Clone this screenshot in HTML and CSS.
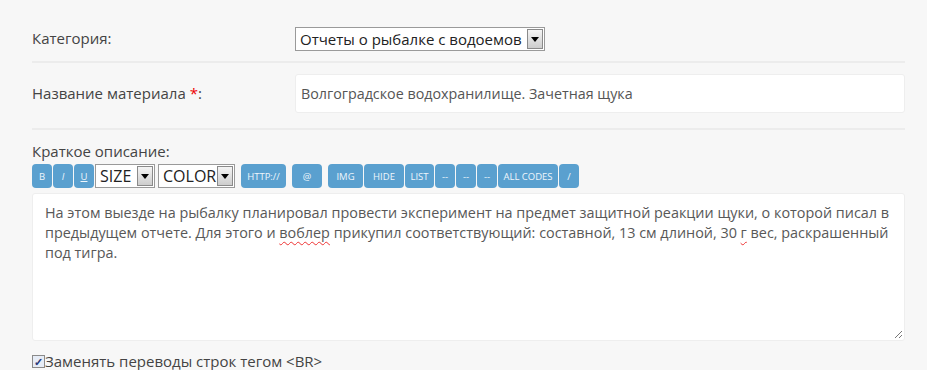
FILE: index.html
```html
<!DOCTYPE html>
<html lang="ru">
<head>
  <meta charset="UTF-8">
  <title>Добавить материал</title>
  <link rel="stylesheet" href="styles.css">
</head>
<body>
  <form class="edit-form">
    <div class="form-row">
      <label class="row-label">Категория:</label>
      <div class="row-field">
        <span class="old-select old-select-wide">
          <span class="old-select-text">Отчеты о рыбалке с водоемов</span>
          <span class="old-select-arrow"></span>
        </span>
      </div>
    </div>
    <div class="form-row form-row-input">
      <label class="row-label">Название материала <span class="req">*</span>:</label>
      <div class="row-field">
        <input type="text" class="text-input" value="Волгоградское водохранилище. Зачетная щука">
      </div>
    </div>
    <div class="desc-block">
      <label class="desc-label">Краткое описание:</label>
      <div class="bb-toolbar">
        <span class="bb-btn bb-sq">B</span>
        <span class="bb-btn bb-sq"><i>I</i></span>
        <span class="bb-btn bb-sq"><u>U</u></span>
        <span class="old-select old-select-size">
          <span class="old-select-text">SIZE</span>
          <span class="old-select-arrow"></span>
        </span>
        <span class="old-select old-select-color">
          <span class="old-select-text">COLOR</span>
          <span class="old-select-arrow"></span>
        </span>
        <span class="bb-btn bb-gap bb-http">HTTP://</span>
        <span class="bb-btn bb-gap bb-mail">@</span>
        <span class="bb-btn bb-gap bb-img">IMG</span>
        <span class="bb-btn bb-hide">HIDE</span>
        <span class="bb-btn bb-list">LIST</span>
        <span class="bb-btn bb-sq">--</span>
        <span class="bb-btn bb-sq">--</span>
        <span class="bb-btn bb-sq">--</span>
        <span class="bb-btn bb-all">ALL CODES</span>
        <span class="bb-btn bb-sq">/</span>
      </div>
      <div class="desc-area">
        <p>На этом выезде на рыбалку планировал провести эксперимент на предмет защитной реакции щуки, о которой писал в предыдущем отчете. Для этого и <span class="typo">воблер</span> прикупил соответствующий: составной, 13 см длиной, 30 <span class="typo">г</span> вес, раскрашенный под тигра.</p>
        <span class="resize-grip"></span>
      </div>
      <label class="br-check"><span class="check-box">&#10003;</span>Заменять переводы строк тегом &lt;BR&gt;</label>
    </div>
  </form>
</body>
</html>
```

FILE: styles.css
```css
/* General */
* {
  margin: 0;
  padding: 0;
  box-sizing: border-box;
}

body {
  background: #f7f7f7;
  font-family: 'Open Sans', sans-serif;
  color: #444;
  height: 370px;
  overflow: hidden;
}

.edit-form {
  width: 873px;
  margin-left: 32px;
  padding-top: 27px;
}

/* Rows */
.form-row {
  display: flex;
  align-items: center;
  border-bottom: 2px solid #ececec;
  padding-bottom: 10px;
}

.form-row-input {
  padding-top: 11px;
  padding-bottom: 15px;
}

.row-label {
  width: 263px;
  font-size: 15px;
  color: #444;
  margin-top: -2px;
}

.req {
  color: #e00;
}

.row-field {
  flex: 1;
}

.text-input {
  width: 100%;
  height: 39px;
  border: 1px solid #eee;
  border-radius: 3px;
  background: #fff;
  padding: 0 5px;
  font-family: 'Open Sans', sans-serif;
  font-size: 14.3px;
  color: #555;
  outline: none;
}

/* Old style select */
.old-select {
  display: inline-flex;
  align-items: center;
  height: 24px;
  border: 1px solid #9a9a9a;
  background: #fff;
  padding: 0 1px 0 4px;
  color: #222;
  overflow: hidden;
  flex-shrink: 0;
}

.old-select-wide {
  width: 250px;
  font-size: 15px;
}

.old-select-text {
  flex: 1;
  white-space: nowrap;
  overflow: hidden;
}

.old-select-arrow {
  position: relative;
  flex-shrink: 0;
  width: 16px;
  height: 20px;
  border: 1px solid #8a8a8a;
  background: linear-gradient(#f4f4f4, #cdcdcd);
}

.old-select-arrow::after {
  content: "";
  position: absolute;
  left: 3px;
  top: 7px;
  border-left: 4px solid transparent;
  border-right: 4px solid transparent;
  border-top: 5px solid #000;
}

/* Description */
.desc-block {
  padding-top: 12px;
}

.desc-label {
  display: block;
  font-size: 15px;
  color: #444;
  line-height: 18px;
}

.bb-toolbar {
  display: flex;
  align-items: center;
  gap: 1px;
  margin-top: 4px;
  height: 24px;
}

.bb-btn {
  display: inline-flex;
  align-items: center;
  justify-content: center;
  flex-shrink: 0;
  height: 24px;
  background: #5aa0cf;
  color: #eef6fc;
  border-radius: 4px;
  font-size: 9.5px;
}

.bb-sq {
  width: 20px;
}

.bb-gap {
  margin-left: 5px;
}

.bb-http {
  width: 45px;
}

.bb-mail {
  width: 30px;
}

.bb-img {
  width: 35px;
}

.bb-hide {
  width: 40px;
}

.bb-list {
  width: 29px;
}

.bb-all {
  width: 60px;
}

.old-select-size {
  width: 60px;
  font-size: 16px;
}

.old-select-color {
  width: 77px;
  margin-left: 2px;
  font-size: 16px;
}

.desc-area {
  position: relative;
  margin-top: 5px;
  height: 148px;
  background: #fff;
  border: 1px solid #eee;
  border-radius: 3px;
  padding: 9px 12px;
}

.desc-area p {
  font-size: 14.4px;
  line-height: 20px;
  color: #585858;
}

.typo {
  text-decoration: underline wavy #e33;
  text-decoration-thickness: 1px;
  text-underline-offset: 3px;
}

.resize-grip {
  position: absolute;
  right: 2px;
  bottom: 2px;
  width: 7px;
  height: 7px;
  background: linear-gradient(135deg, transparent 45%, #777 45%, #777 55%, transparent 55%, transparent 75%, #777 75%, #777 85%, transparent 85%);
}

.br-check {
  display: flex;
  align-items: center;
  margin-top: 10px;
  font-size: 15px;
  color: #444;
}

.check-box {
  display: inline-flex;
  align-items: center;
  justify-content: center;
  width: 13px;
  height: 13px;
  border: 1px solid #8a8a8a;
  background: #e6ecf6;
  color: #2a3a7a;
  font-size: 11px;
  font-weight: bold;
  line-height: 1;
}
```
